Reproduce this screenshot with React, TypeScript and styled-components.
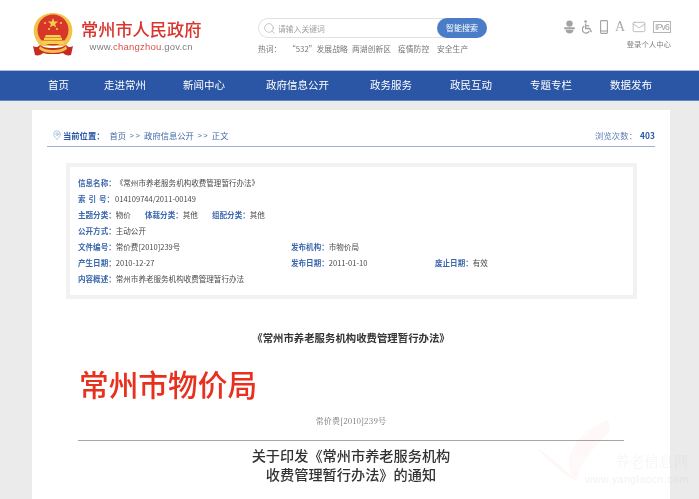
import React from "react";
import styled, { createGlobalStyle } from "styled-components";
import { Mail, Search, MapPin } from "lucide-react";

const Global = createGlobalStyle`
  html, body { margin: 0; padding: 0; background: #ebebeb; }
  * { box-sizing: border-box; }
  #root { font-family: "Noto Sans CJK SC", "Noto Sans", sans-serif; }
`;
const Page = styled.div`
  position: relative;
  width: 699px;
  height: 499px;
  overflow: hidden;
  background: #ebebeb;
  filter: blur(0.3px);
`;
const Header = styled.header`
  height: 70px;
  background: #fff;
  display: flex;
  align-items: flex-start;
`;
const Logo = styled.div`
  display: flex;
  width: 258px;
  padding: 13px 0 0 33px;
  gap: 8px;
`;
const LogoText = styled.div`
  display: flex;
  flex-direction: column;
  align-items: center;
  padding-top: 6px;
`;
const SiteName = styled.div`
  font-size: 17.2px;
  line-height: 20px;
  font-weight: 500;
  color: #d8352f;
  white-space: nowrap;
`;
const SiteUrl = styled.div`
  font-family: "Liberation Sans", sans-serif;
  font-size: 9.5px;
  line-height: 12px;
  margin-top: 2px;
  color: #808080;
  letter-spacing: 0.2px;
  b { color: #d8524c; font-weight: 400; }
`;
const SearchCol = styled.div`
  width: 229px;
  margin-top: 18px;
`;
const SearchBar = styled.div`
  height: 20px;
  border: 1px solid #e2e2e2;
  border-radius: 10px;
  display: flex;
  align-items: center;
  padding-left: 4px;
  gap: 2px;
  font-size: 7.8px;
  color: #a0a0a0;
`;
const SearchBtn = styled.div`
  margin: -1px -1px -1px auto;
  width: 50px;
  height: 20px;
  border-radius: 10px;
  background: #4a7cc8;
  color: #fff;
  font-size: 8px;
  line-height: 20px;
  text-align: center;
`;
const Hot = styled.div`
  display: flex;
  margin-top: 5px;
  font-size: 7.8px;
  line-height: 11px;
  color: #777;
  white-space: nowrap;
`;
const HotItem = styled.span<{ $w: number }>`
  width: ${(p) => p.$w}px;
`;
const Tools = styled.div`
  width: 107px;
  margin: 20px 0 0 77px;
`;
const Icons = styled.div`
  display: flex;
  align-items: center;
  justify-content: space-between;
  height: 14px;
  color: #a3a3a3;
`;
const FontA = styled.span`
  font-family: "Liberation Serif", serif;
  font-size: 14px;
  line-height: 14px;
  width: 10px;
  text-align: center;
  color: #a8a8a8;
`;
const Ipv6 = styled.span`
  font-family: "Liberation Sans", sans-serif;
  font-size: 8.5px;
  line-height: 10px;
  width: 18px;
  height: 12px;
  border: 1px solid #b5b5b5;
  color: #a3a3a3;
  text-align: center;
  letter-spacing: -0.8px;
  white-space: nowrap;
  overflow: hidden;
`;
const Login = styled.div`
  font-size: 7.4px;
  line-height: 11px;
  margin-top: 4px;
  text-align: right;
  color: #808080;
  white-space: nowrap;
`;
const Nav = styled.nav`
  height: 31px;
  background: #2a56a5;
  border-top: 1px solid #a9c0e0;
  border-bottom: 1px solid #5f86c2;
  display: flex;
  align-items: center;
  padding: 0 0 2px 48px;
  color: #fff;
  font-size: 10.5px;
`;
const NavItem = styled.span<{ $gap?: number }>`
  margin-left: ${(p) => p.$gap ?? 38}px;
  &:first-child { margin-left: 0; }
`;
const Card = styled.main`
  width: 638px;
  margin: 9px 0 0 32px;
  background: #fff;
  height: 400px;
  padding: 0 15px;
`;
const Crumb = styled.div`
  height: 37px;
  border-bottom: 1px solid #9db4d8;
  display: flex;
  align-items: center;
  padding: 13px 0 0 5px;
  font-size: 8.3px;
  color: #4068a6;
  white-space: nowrap;
`;
const CrumbLabel = styled.b`
  color: #2a56a5;
  margin: 0 5px 0 1px;
  font-weight: 700;
`;
const Sep = styled.span`
  font-family: "Liberation Sans", sans-serif;
  font-size: 7.5px;
  letter-spacing: 1.6px;
  margin: 0 2.5px 0 3.5px;
  padding-top: 2px;
`;
const Views = styled.span`
  margin-left: auto;
  color: #5b7db5;
  letter-spacing: 0.1px;
  b { color: #2a56a5; margin-left: 1px; }
`;
const InfoBox = styled.section`
  width: 571px;
  height: 136px;
  margin: 16px 0 0 19px;
  border: 4px solid #f2f2f2;
  padding: 7px 0 0 8px;
`;
const InfoRow = styled.div`
  display: flex;
  height: 16px;
  align-items: center;
  font-size: 7.55px;
  color: #4a4a4a;
  white-space: nowrap;
`;
const Field = styled.div<{ $w?: number }>`
  display: flex;
  ${(p) => (p.$w ? `width: ${p.$w}px;` : "")}
`;
const Label = styled.span<{ $spread?: boolean }>`
  flex: 0 0 37px;
  color: #3a66ad;
  font-weight: 700;
  ${(p) => (p.$spread ? "word-spacing: 1.2px;" : "")}
`;
const Doc = styled.article`
  width: 546px;
  margin: 0 0 0 31px;
`;
const DocTitle = styled.h2`
  margin: 31px 0 0;
  text-align: center;
  font-size: 10.4px;
  line-height: 16px;
  font-weight: 700;
  color: #333;
`;
const Bureau = styled.div`
  margin-top: 18px;
  margin-left: 1px;
  font-size: 29.7px;
  line-height: 40px;
  font-weight: 500;
  color: #e8301f;
`;
const DocNo = styled.div`
  margin-top: 11px;
  text-align: center;
  font-family: "Noto Serif CJK SC", "Liberation Serif", "Noto Sans CJK SC", serif;
  font-size: 8px;
  line-height: 12px;
  letter-spacing: 0.2px;
  color: #707070;
`;
const Rule = styled.hr`
  margin: 13px 0 0;
  border: 0;
  border-top: 1px solid #a6a6a6;
`;
const Notice = styled.h1`
  margin: 5px 0 0;
  text-align: center;
  font-size: 14.2px;
  line-height: 19px;
  font-weight: 500;
  color: #333;
`;
const Watermark = styled.div`
  position: absolute;
  left: 535px;
  top: 418px;
  width: 164px;
  height: 81px;
  pointer-events: none;
`;
const WmName = styled.div`
  position: absolute;
  left: 80px;
  top: 33px;
  font-family: "Noto Serif CJK SC", "Noto Sans CJK SC", serif;
  font-size: 14.6px;
  line-height: 20px;
  white-space: nowrap;
  color: rgba(190, 190, 190, 0.15);
`;
const WmUrl = styled.div`
  position: absolute;
  left: 50px;
  top: 54px;
  font-family: "Liberation Sans", sans-serif;
  font-size: 10.5px;
  line-height: 14px;
  letter-spacing: 0.45px;
  white-space: nowrap;
  color: rgba(190, 190, 190, 0.2);
`;

const Emblem = () => (
  <svg width="40" height="44" viewBox="0 0 40 44">
    <path d="M8 33 C1 27 0 19 1 14 C3 5 11 0 20 0 C29 0 37 5 39 14 C40 19 39 27 32 33Z" fill="#f3c349" />
    <circle cx="20" cy="17" r="15.5" fill="#d9362a" />
    <path d="M20 5l1.3 3.6h3.8l-3 2.3 1.1 3.7-3.2-2.2-3.2 2.2 1.1-3.7-3-2.3h3.8z" fill="#f6d04d" />
    <circle cx="12" cy="10" r="1.1" fill="#f6d04d" />
    <circle cx="28" cy="10" r="1.1" fill="#f6d04d" />
    <circle cx="16" cy="16" r="1.1" fill="#f6d04d" />
    <circle cx="24" cy="16" r="1.1" fill="#f6d04d" />
    <path d="M13 22h14l1.5 2.5h-17z M11 25h18v2H11z M9 27.5h22V31H9z" fill="#f6d04d" />
    <path d="M0 33c3 2 5 1 7-1 3 2 5 3 13 3s10-1 13-3c2 2 4 3 7 1l-2 9c-3 1-6 0-8-2-3 1-6 1-10 1s-7 0-10-1c-2 2-5 3-8 2z" fill="#c62a22" />
    <path d="M7 33c3 3 8 4 13 4s10-1 13-4l1 3c-4 3-9 4-14 4s-10-1-14-4z" fill="#f3c349" />
  </svg>
);

const HatIcon = () => (
  <svg width="11" height="14" viewBox="0 0 11 14">
    <circle cx="5.5" cy="3.6" r="3.2" fill="#a3a3a3" />
    <rect x="0" y="7.2" width="11" height="2" rx="1" fill="#a3a3a3" />
    <path d="M1.5 9.8h8c0 2.4-1.8 3.8-4 3.8s-4-1.4-4-3.8z" fill="#a3a3a3" />
  </svg>
);

const WheelchairIcon = () => (
  <svg width="11" height="14" viewBox="0 0 11 14" fill="none" stroke="#a3a3a3" strokeWidth="1.3">
    <circle cx="3.6" cy="1.5" r="1.3" fill="#a3a3a3" stroke="none" />
    <path d="M3.6 3.5v5h4l1.8 3.6" />
    <path d="M3.6 5.8h3.6" />
    <path d="M2.2 6.3a3.6 3.6 0 1 0 5 4.6" />
  </svg>
);

const PhoneIcon = () => (
  <svg width="8" height="14" viewBox="0 0 8 14" fill="none" stroke="#a3a3a3" strokeWidth="1.1">
    <rect x="0.6" y="0.6" width="6.8" height="12.8" rx="0.8" />
    <path d="M0.6 11h6.8" />
  </svg>
);

const Swoosh = () => (
  <svg width="80" height="70" viewBox="0 0 80 70">
    <path d="M72 2 C50 12 32 28 34 48 C36 56 38 60 42 64 C46 40 60 30 74 14 C76 10 75 4 72 2Z" fill="rgba(240,90,60,0.035)" />
    <path d="M2 30 C14 38 30 50 42 64 C28 56 14 44 2 30Z" fill="rgba(240,90,60,0.05)" />
  </svg>
);

export default function App() {
  return (
    <Page>
      <Global />
      <Header>
        <Logo>
          <Emblem />
          <LogoText>
            <SiteName>常州市人民政府</SiteName>
            <SiteUrl>
              www.<b>changzhou</b>.gov.cn
            </SiteUrl>
          </LogoText>
        </Logo>
        <SearchCol>
          <SearchBar>
            <Search size={13} strokeWidth={1.2} color="#aaa" />
            请输入关键词
            <SearchBtn>智能搜索</SearchBtn>
          </SearchBar>
          <Hot>
            <HotItem $w={30}>热词：</HotItem>
            <HotItem $w={64}>“532”发展战略</HotItem>
            <HotItem $w={46}>两湖创新区</HotItem>
            <HotItem $w={39}>疫情防控</HotItem>
            <HotItem $w={40}>安全生产</HotItem>
          </Hot>
        </SearchCol>
        <Tools>
          <Icons>
            <HatIcon />
            <WheelchairIcon />
            <PhoneIcon />
            <FontA>A</FontA>
            <Mail size={14} strokeWidth={1.2} />
            <Ipv6>IPv6</Ipv6>
          </Icons>
          <Login>登录个人中心</Login>
        </Tools>
      </Header>
      <Nav>
        <NavItem>首页</NavItem>
        <NavItem $gap={35}>走进常州</NavItem>
        <NavItem $gap={37}>新闻中心</NavItem>
        <NavItem $gap={41}>政府信息公开</NavItem>
        <NavItem $gap={41}>政务服务</NavItem>
        <NavItem>政民互动</NavItem>
        <NavItem>专题专栏</NavItem>
        <NavItem>数据发布</NavItem>
      </Nav>
      <Card>
        <Crumb>
          <MapPin size={10} strokeWidth={1.3} color="#6f93c8" />
          <CrumbLabel>当前位置：</CrumbLabel>
          首页<Sep>&gt;&gt;</Sep>政府信息公开<Sep>&gt;&gt;</Sep>正文
          <Views>
            浏览次数： <b>403</b>
          </Views>
        </Crumb>
        <InfoBox>
          <InfoRow>
            <Label>信息名称：</Label>《常州市养老服务机构收费管理暂行办法》
          </InfoRow>
          <InfoRow>
            <Label $spread>索 引 号：</Label>014109744/2011-00149
          </InfoRow>
          <InfoRow>
            <Field $w={67}>
              <Label>主题分类：</Label>物价
            </Field>
            <Field $w={67}>
              <Label>体裁分类：</Label>其他
            </Field>
            <Field>
              <Label>组配分类：</Label>其他
            </Field>
          </InfoRow>
          <InfoRow>
            <Label>公开方式：</Label>主动公开
          </InfoRow>
          <InfoRow>
            <Field $w={213}>
              <Label>文件编号：</Label>常价费[2010]239号
            </Field>
            <Field>
              <Label>发布机构：</Label>市物价局
            </Field>
          </InfoRow>
          <InfoRow>
            <Field $w={213}>
              <Label>产生日期：</Label>2010-12-27
            </Field>
            <Field $w={144}>
              <Label>发布日期：</Label>2011-01-10
            </Field>
            <Field>
              <Label>废止日期：</Label>有效
            </Field>
          </InfoRow>
          <InfoRow>
            <Label>内容概述：</Label>常州市养老服务机构收费管理暂行办法
          </InfoRow>
        </InfoBox>
        <Doc>
          <DocTitle>《常州市养老服务机构收费管理暂行办法》</DocTitle>
          <Bureau>常州市物价局</Bureau>
          <DocNo>常价费[2010]239号</DocNo>
          <Rule />
          <Notice>
            关于印发《常州市养老服务机构
            <br />
            收费管理暂行办法》的通知
          </Notice>
        </Doc>
      </Card>
      <Watermark>
        <Swoosh />
        <WmName>养老信息网</WmName>
        <WmUrl>www.yanglaocn.com</WmUrl>
      </Watermark>
    </Page>
  );
}
